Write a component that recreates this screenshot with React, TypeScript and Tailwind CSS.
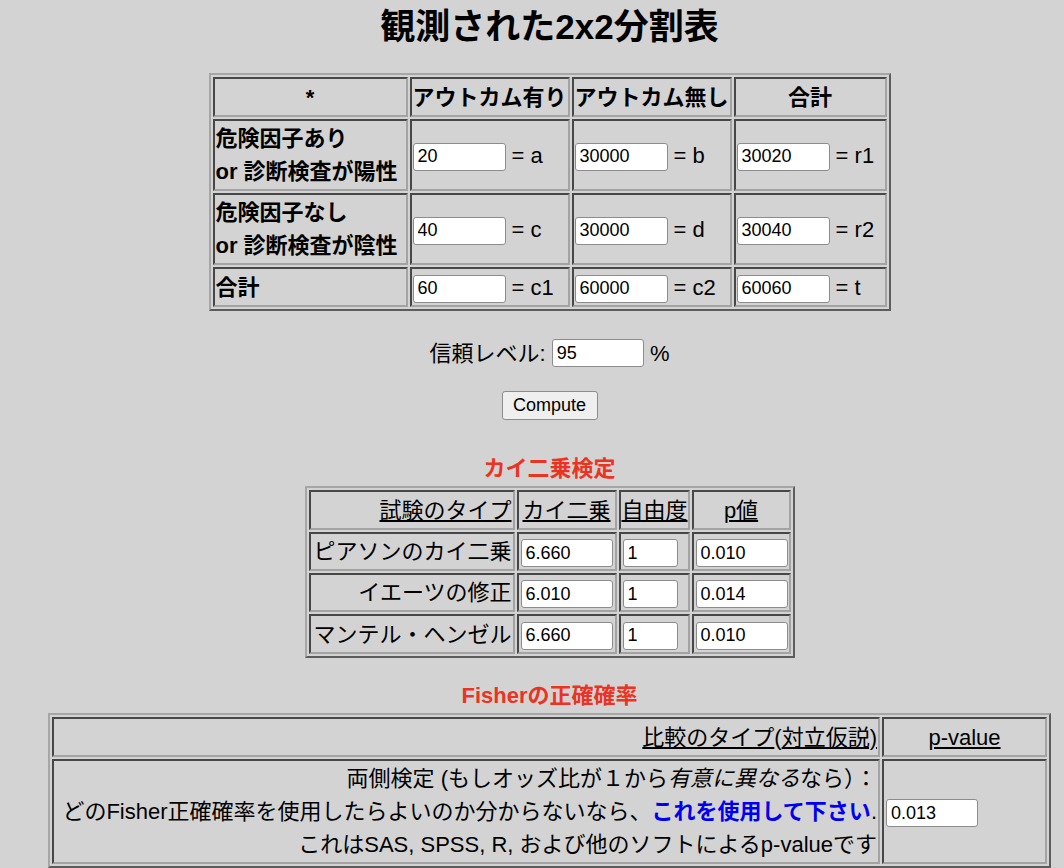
import React from 'react';

const cell =
  'border-2 border-solid border-t-[#474747] border-l-[#474747] border-b-[#a3a3a3] border-r-[#a3a3a3] p-[1px] align-middle whitespace-nowrap';
const table =
  'table-fixed border-separate border-spacing-[2px] border-2 border-solid border-t-[#a6a6a6] border-l-[#a6a6a6] border-b-[#5c5c5c] border-r-[#5c5c5c]';

function Field({ value, w = 'w-[93px]' }: { value: string; w?: string }) {
  return (
    <input
      readOnly
      value={value}
      className={`${w} h-[28px] rounded-[3px] border border-solid border-[#8c8c8c] bg-white pl-[4px] align-middle font-['Liberation_Sans',Arial,sans-serif] text-[18px] text-black outline-none`}
    />
  );
}

function Cross({ value, label }: { value: string; label: string }) {
  return (
    <td className={cell}>
      <Field value={value} /> = {label}
    </td>
  );
}

export default function App() {
  return (
    <div className="h-[868px] w-[1064px] overflow-hidden bg-[#d3d3d3] font-['Liberation_Sans','Noto_Sans_CJK_JP',sans-serif] text-[22px] text-black">
      <div className="flex w-[1099px] flex-col items-center">
        {/* 2x2 table */}
        <h1 className="h-[54px] text-center text-[35px] font-bold leading-[54px]">観測された2x2分割表</h1>

        <table className={`${table} mt-[19px] w-[682px]`}>
          <tbody>
            <tr className="h-[40px] font-bold">
              <td className={`${cell} w-[195px] text-center`}>*</td>
              <td className={`${cell} w-[160px] text-center`}>アウトカム有り</td>
              <td className={`${cell} w-[160px] text-center`}>アウトカム無し</td>
              <td className={`${cell} w-[153px] text-center`}>合計</td>
            </tr>
            <tr className="h-[72px]">
              <td className={`${cell} font-bold leading-[33px]`}>
                危険因子あり
                <br />
                or 診断検査が陽性
              </td>
              <Cross value="20" label="a" />
              <Cross value="30000" label="b" />
              <Cross value="30020" label="r1" />
            </tr>
            <tr className="h-[72px]">
              <td className={`${cell} font-bold leading-[33px]`}>
                危険因子なし
                <br />
                or 診断検査が陰性
              </td>
              <Cross value="40" label="c" />
              <Cross value="30000" label="d" />
              <Cross value="30040" label="r2" />
            </tr>
            <tr className="h-[40px]">
              <td className={`${cell} font-bold`}>合計</td>
              <Cross value="60" label="c1" />
              <Cross value="60000" label="c2" />
              <Cross value="60060" label="t" />
            </tr>
          </tbody>
        </table>

        <div className="mt-[28px] flex h-[28px] items-center whitespace-pre">
          <span>信頼レベル: </span>
          <Field value="95" w="w-[92px]" />
          <span> %</span>
        </div>

        <button className="mt-[24px] h-[29px] w-[96px] rounded-[3px] border border-solid border-[#8c8c8c] bg-[#efefef] font-['Liberation_Sans',Arial,sans-serif] text-[18px] text-black">
          Compute
        </button>

        {/* chi-square */}
        <div className="mt-[32px] h-[34px] text-center font-bold leading-[34px] text-[#eb3323]">カイ二乗検定</div>

        <table className={`${table} w-[490px]`}>
          <tbody>
            <tr className="h-[40px]">
              <td className={`${cell} w-[206px] text-right`}>
                <u>試験のタイプ</u>
              </td>
              <td className={`${cell} w-[100px] text-center`}>
                <u>カイ二乗</u>
              </td>
              <td className={`${cell} w-[71px] text-center`}>
                <u>自由度</u>
              </td>
              <td className={`${cell} w-[99px] text-center`}>
                <u>p値</u>
              </td>
            </tr>
            {[
              ['ピアソンのカイ二乗', '6.660', '1', '0.010'],
              ['イエーツの修正', '6.010', '1', '0.014'],
              ['マンテル・ヘンゼル', '6.660', '1', '0.010'],
            ].map(([name, chi, df, p], i) => (
              <tr key={name} className={i === 2 ? 'h-[40px]' : 'h-[39px]'}>
                <td className={`${cell} text-right`}>{name}</td>
                <td className={`${cell} pl-[2px]`}>
                  <Field value={chi} w="w-[92px]" />
                </td>
                <td className={`${cell} pl-[2px]`}>
                  <Field value={df} w="w-[55px]" />
                </td>
                <td className={`${cell} pl-[2px]`}>
                  <Field value={p} w="w-[92px]" />
                </td>
              </tr>
            ))}
          </tbody>
        </table>

        {/* Fisher */}
        <div className="mt-[21px] h-[34px] text-center font-bold leading-[34px] text-[#eb3323]">Fisherの正確確率</div>

        <table className={`${table} w-[1003px]`}>
          <tbody>
            <tr className="h-[40px]">
              <td className={`${cell} w-[828px] text-right`}>
                <u>比較のタイプ</u>(<u>対立仮説)</u>
              </td>
              <td className={`${cell} w-[165px] text-center`}>
                <u>p-value</u>
              </td>
            </tr>
            <tr>
              <td className={`${cell} text-right leading-[33px]`}>
                <div>
                  両側検定 (もしオッズ比が１から<i>有意に異なる</i>なら）：
                </div>
                <div>
                  どのFisher正確確率を使用したらよいのか分からないなら、
                  <b className="text-[#0000ee]">これを使用して下さい</b>.
                </div>
                <div>これはSAS, SPSS, R, および他のソフトによるp-valueです</div>
              </td>
              <td className={`${cell} pl-[2px]`}>
                <Field value="0.013" w="w-[92px]" />
              </td>
            </tr>
          </tbody>
        </table>
      </div>
    </div>
  );
}
